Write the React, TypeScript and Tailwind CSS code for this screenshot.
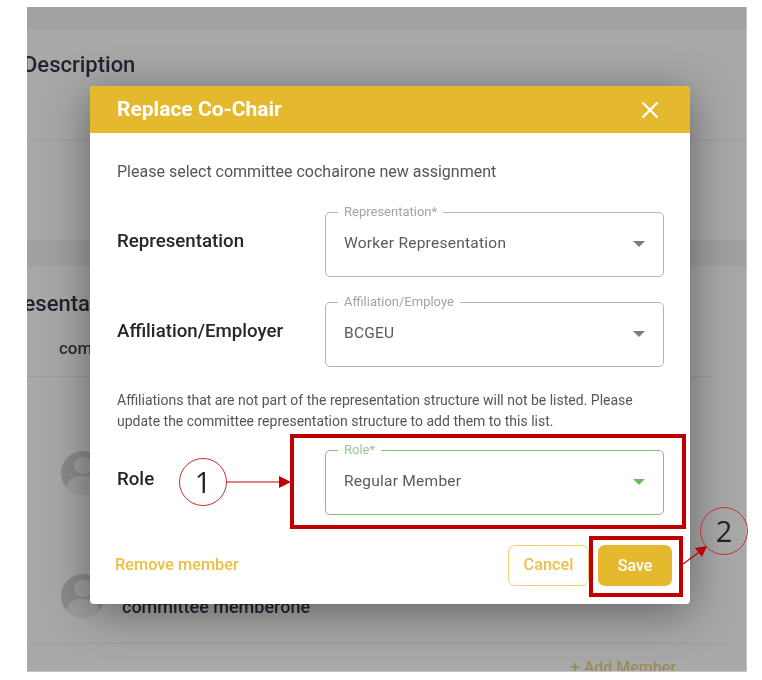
import React from "react";

function Caret({ color }: { color: string }) {
  return (
    <svg width="12" height="6" viewBox="0 0 12 6" className="shrink-0">
      <path d="M0 0H12L6 6Z" fill={color} />
    </svg>
  );
}

function SelectRow({
  label,
  legend,
  value,
  green,
}: {
  label: string;
  legend: string;
  value: string;
  green?: boolean;
}) {
  return (
    <div className="flex items-center">
      <div className="w-[208px] pb-[8px] text-[18.7px] font-medium leading-5 text-[#262626]">{label}</div>
      <div
        className={`relative flex h-[65px] w-[339px] items-center justify-between rounded-[5px] border pl-[18px] pr-[18px] pb-[2px] ${
          green ? "border-[#7cc576]" : "border-[#b4b4b4]"
        }`}
      >
        <span
          className={`absolute left-[12px] top-[-8px] bg-white px-[6px] text-[13px] leading-[14px] ${
            green ? "text-[#8fd08a]" : "text-[#a3a3a3]"
          }`}
        >
          {legend}
        </span>
        <span className="text-[15.5px] tracking-[0.25px] text-[#5a5a5a]">{value}</span>
        <Caret color={green ? "#6fbb63" : "#7d7d7d"} />
      </div>
    </div>
  );
}

function Avatar() {
  return (
    <div className="relative h-[44px] w-[44px] shrink-0 overflow-hidden rounded-full bg-[#8b8b8b]">
      <div className="absolute left-[13px] top-[6px] h-[17px] w-[18px] rounded-full bg-[#9e9e9e]" />
      <div className="absolute left-[6px] top-[25px] h-[24px] w-[32px] rounded-full bg-[#9e9e9e]" />
    </div>
  );
}

export default function App() {
  return (
    <div className="relative h-[680px] w-[762px] overflow-hidden bg-white pl-[27px] pt-[7px] font-['Roboto',sans-serif] blur-[0.4px]">
      {/* dimmed page */}
      <div className="flex h-[665px] w-[720px] flex-col overflow-hidden border-r border-b border-[#c4c4c4] bg-[#a8a8a8]">
        <div className="h-[23px] shrink-0 bg-[#a2a2a2]" />
        <div className="h-[111px] shrink-0 border-b border-[#9c9c9c] pt-[23px]">
          <div className="-ml-[4px] text-[22px] font-medium leading-6 text-[#1f2430]">Description</div>
        </div>
        <div className="h-[99px] shrink-0" />
        <div className="h-[26px] shrink-0 bg-[#a0a0a0]" />
        <div className="flex-1 rounded-tr-[12px] bg-[#a8a8a8]">
          <div className="-ml-[49px] pt-[26px] text-[22px] font-medium leading-6 text-[#1f2430]">Representation</div>
          <div className="mr-[33px] border-b border-[#9c9c9c] pb-[18px] pl-[32px] pt-[22px] text-[17px] font-medium leading-5 text-[#2b2b33]">
            com
          </div>
          <div className="flex items-center pl-[34px] pt-[74px]">
            <Avatar />
          </div>
          <div className="flex items-center gap-[17px] pl-[34px] pt-[79px]">
            <Avatar />
            <span className="mt-[22px] text-[18px] font-medium leading-5 text-[#1f2430]">committee memberone</span>
          </div>
          <div className="mr-[18px] mt-[25px] border-t border-[#9c9c9c] pr-[52px] pt-[14px] text-right text-[16px] font-medium leading-5 text-[#9b8b58]">
            + Add Member
          </div>
        </div>
      </div>

      {/* modal */}
      <div className="absolute left-[90px] top-[86px] flex h-[518px] w-[600px] flex-col overflow-hidden rounded-[4px] bg-white shadow-[0_8px_45px_rgba(0,0,0,0.42)]">
        <div className="flex h-[47px] shrink-0 items-center justify-between bg-[#e5b92e] pl-[27px] pr-[29px]">
          <span className="text-[21px] font-bold text-white">Replace Co-Chair</span>
          <svg width="22" height="22" viewBox="0 0 22 22" fill="none" stroke="white" strokeWidth="2.4">
            <path d="M3.5 3.5L18.5 18.5M18.5 3.5L3.5 18.5" />
          </svg>
        </div>
        <div className="flex flex-1 flex-col pl-[27px] pr-[26px]">
          <p className="mt-[29px] text-[16px] leading-5 text-[#555555]">
            Please select committee cochairone new assignment
          </p>
          <div className="mt-[30px] flex flex-col gap-[25px]">
            <SelectRow label="Representation" legend="Representation*" value="Worker Representation" />
            <SelectRow label="Affiliation/Employer" legend="Affiliation/Employe" value="BCGEU" />
          </div>
          <p className="mt-[23px] w-[540px] text-[14px] leading-[21px] text-[#555555]">
            Affiliations that are not part of the representation structure will not be listed. Please update the
            committee representation structure to add them to this list.
          </p>
          <div className="mt-[18px]">
            <SelectRow label="Role" legend="Role*" value="Regular Member" green />
          </div>
          <div className="-ml-[2px] mt-[30px] flex items-center justify-between">
            <span className="text-[16.3px] font-medium text-[#eebf45]">Remove member</span>
            <div className="-mr-[8px] flex gap-[9px]">
              <button className="h-[41px] w-[81px] rounded-[7px] border-[1.5px] border-[#efcd6e] bg-white text-[16.3px] font-medium text-[#eebf45]">
                Cancel
              </button>
              <button className="h-[41px] w-[74px] rounded-[7px] bg-[#e5b92e] text-[16px] font-medium text-white">
                Save
              </button>
            </div>
          </div>
        </div>
      </div>

      {/* annotations */}
      <div className="absolute left-[290px] top-[434px] h-[95px] w-[396px] border-[4px] border-[#c00000]" />
      <div className="absolute left-[589px] top-[536px] h-[61px] w-[94px] border-[4px] border-[#c00000]" />
      <div className="absolute left-[179px] top-[458px] flex h-[48px] w-[48px] items-center justify-center rounded-full border border-[#c8302f] bg-white font-['Open_Sans',sans-serif] text-[29px] text-[#222222]">
        1
      </div>
      <div className="absolute left-[700px] top-[507px] flex h-[48px] w-[48px] items-center justify-center rounded-full border border-[#c8302f] font-['Open_Sans',sans-serif] text-[29px] text-[#222222]">
        2
      </div>
      <svg className="absolute left-0 top-0" width="762" height="680" viewBox="0 0 762 680" fill="none">
        <path d="M227 482H282" stroke="#c00000" strokeWidth="1" />
        <path d="M279 476L291 482L279 488Z" fill="#c00000" />
        <path d="M683 564L702 550" stroke="#c00000" strokeWidth="1.2" />
        <path d="M695 548L707 546L702 557Z" fill="#c00000" />
      </svg>
    </div>
  );
}
